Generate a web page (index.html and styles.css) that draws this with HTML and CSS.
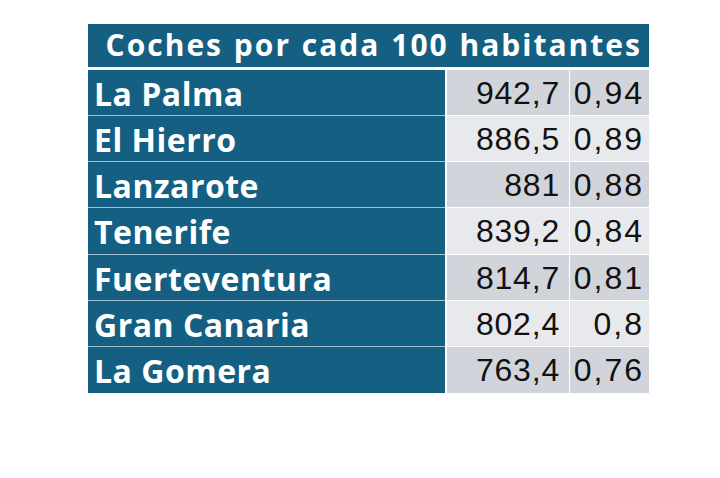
FILE: index.html
```html
<!DOCTYPE html>
<html lang="es">
<head>
<meta charset="utf-8">
<title>Coches por cada 100 habitantes</title>
<link rel="stylesheet" href="styles.css">
</head>
<body>
<div class="page">
  <div class="table">
    <div class="title">Coches por cada 100 habitantes</div>
    <div class="grid">
      <div class="row dark"><div class="name">La Palma</div><div class="num">942,7</div><div class="ratio">0,94</div></div>
      <div class="row light"><div class="name">El Hierro</div><div class="num">886,5</div><div class="ratio">0,89</div></div>
      <div class="row dark"><div class="name">Lanzarote</div><div class="num">881</div><div class="ratio">0,88</div></div>
      <div class="row light"><div class="name">Tenerife</div><div class="num">839,2</div><div class="ratio">0,84</div></div>
      <div class="row dark"><div class="name">Fuerteventura</div><div class="num">814,7</div><div class="ratio">0,81</div></div>
      <div class="row light"><div class="name">Gran Canaria</div><div class="num">802,4</div><div class="ratio">0,8</div></div>
      <div class="row dark last"><div class="name">La Gomera</div><div class="num">763,4</div><div class="ratio">0,76</div></div>
    </div>
  </div>
</div>
</body>
</html>
```
FILE: styles.css
```css
html, body {
  margin: 0;
  padding: 0;
  background: #ffffff;
}
.page {
  padding: 24px 0 0 88px;
}
.table {
  width: 561px;
}
.title {
  height: 43px;
  line-height: 42px;
  background: #156082;
  color: #ffffff;
  font-family: "Open Sans", "Liberation Sans", sans-serif;
  font-weight: 700;
  font-size: 30px;
  letter-spacing: 2px;
  word-spacing: 1px;
  text-align: right;
  padding-right: 7px;
  margin-bottom: 3px;
  white-space: nowrap;
}
.grid {
  display: flex;
  flex-direction: column;
}
.row {
  display: grid;
  grid-template-columns: 357px 2px 122px 1px 79px;
  height: 46.15px;
}
.row > .name { grid-column: 1; }
.row > .num { grid-column: 3; }
.row > .ratio { grid-column: 5; }
.name {
  background: #156082;
  color: #ffffff;
  font-family: "Open Sans", "Liberation Sans", sans-serif;
  font-weight: 700;
  font-size: 32px;
  letter-spacing: 0.5px;
  padding-left: 6px;
  display: flex;
  align-items: center;
  padding-top: 2px;
  border-bottom: 1px solid #a3bfd3;
  box-sizing: border-box;
}
.num, .ratio {
  font-family: "Liberation Sans", Arial, sans-serif;
  font-size: 32px;
  letter-spacing: 0.8px;
  color: #111111;
  display: flex;
  align-items: center;
  justify-content: flex-end;
  padding-top: 2px;
  border-bottom: 1px solid #ffffff;
  box-sizing: border-box;
}
.num { padding-right: 9px; }
.ratio { padding-right: 5px; letter-spacing: 2px; }
.dark .num, .dark .ratio { background: #d1d5db; }
.light .num, .light .ratio { background: #e8e9ec; }
.last > div { border-bottom: none; }
```
